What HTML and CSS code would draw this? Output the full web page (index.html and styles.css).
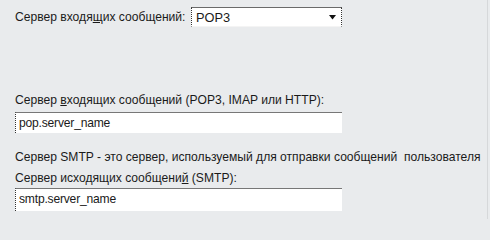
FILE: index.html
```html
<!DOCTYPE html>
<html lang="ru">
<head>
<meta charset="utf-8">
<link rel="stylesheet" href="styles.css">
</head>
<body>
<div class="panel">
  <div class="row">
    <span class="label label-inline">Сервер входя<u>щ</u>их сообщений:</span>
    <div class="select">
      <span class="select-text">POP3</span>
      <svg class="arrow" width="7" height="5" viewBox="0 0 7 5"><polygon points="0,0 7,0 3.5,4.5" fill="#111"/></svg>
    </div>
  </div>
  <div class="label label-in">Сервер <u>в</u>ходящих сообщений (POP3, IMAP или HTTP):</div>
  <div class="field field-pop">pop.server_name</div>
  <div class="label label-note">Сервер SMTP - это сервер, используемый для отправки сообщений&nbsp; пользователя</div>
  <div class="label label-out">Сервер исходящих сообщени<u>й</u> (SMTP):</div>
  <div class="field field-smtp">smtp.server_name</div>
</div>
</body>
</html>
```
FILE: styles.css
```css
html, body {
  margin: 0;
  padding: 0;
  background: #e9ebed;
}
body {
  width: 490px;
  height: 219px;
  overflow: hidden;
  font-family: "Liberation Sans", Arial, sans-serif;
  font-size: 12.1px;
  color: #1a1a1a;
}
.panel {
  width: 472px;
  height: 219px;
  padding-left: 15px;
  border-right: 1px solid #d6d8da;
  box-sizing: content-box;
}
.row {
  display: flex;
  align-items: center;
  padding-top: 7px;
  height: 20px;
}
.label {
  line-height: 16px;
  height: 16px;
  white-space: nowrap;
}
.label-inline {
  width: 176px;
  flex: none;
}
.select {
  width: 151px;
  height: 20px;
  box-sizing: border-box;
  background: #fff;
  border-top: 1px solid #6a6a6a;
  border-left: 1px dotted #333;
  border-right: 1px dotted #333;
  border-bottom: 1px solid #f4f4f4;
  display: flex;
  align-items: center;
  justify-content: space-between;
  padding: 0 5px 0 4px;
}
.select-text {
  font-size: 12.8px;
}
.arrow {
  display: block;
}
.label-in {
  margin-top: 65px;
}
.field {
  width: 327px;
  height: 21px;
  box-sizing: border-box;
  background: #fff;
  border-top: 1px solid #777;
  border-left: 1px dotted #333;
  padding-left: 3px;
  line-height: 20px;
  letter-spacing: -0.2px;
}
.field-pop {
  margin-top: 4px;
}
.label-note {
  margin-top: 16px;
}
.label-out {
  margin-top: 5px;
}
.field-smtp {
  margin-top: 2px;
  height: 23px;
  line-height: 20px;
}
```
